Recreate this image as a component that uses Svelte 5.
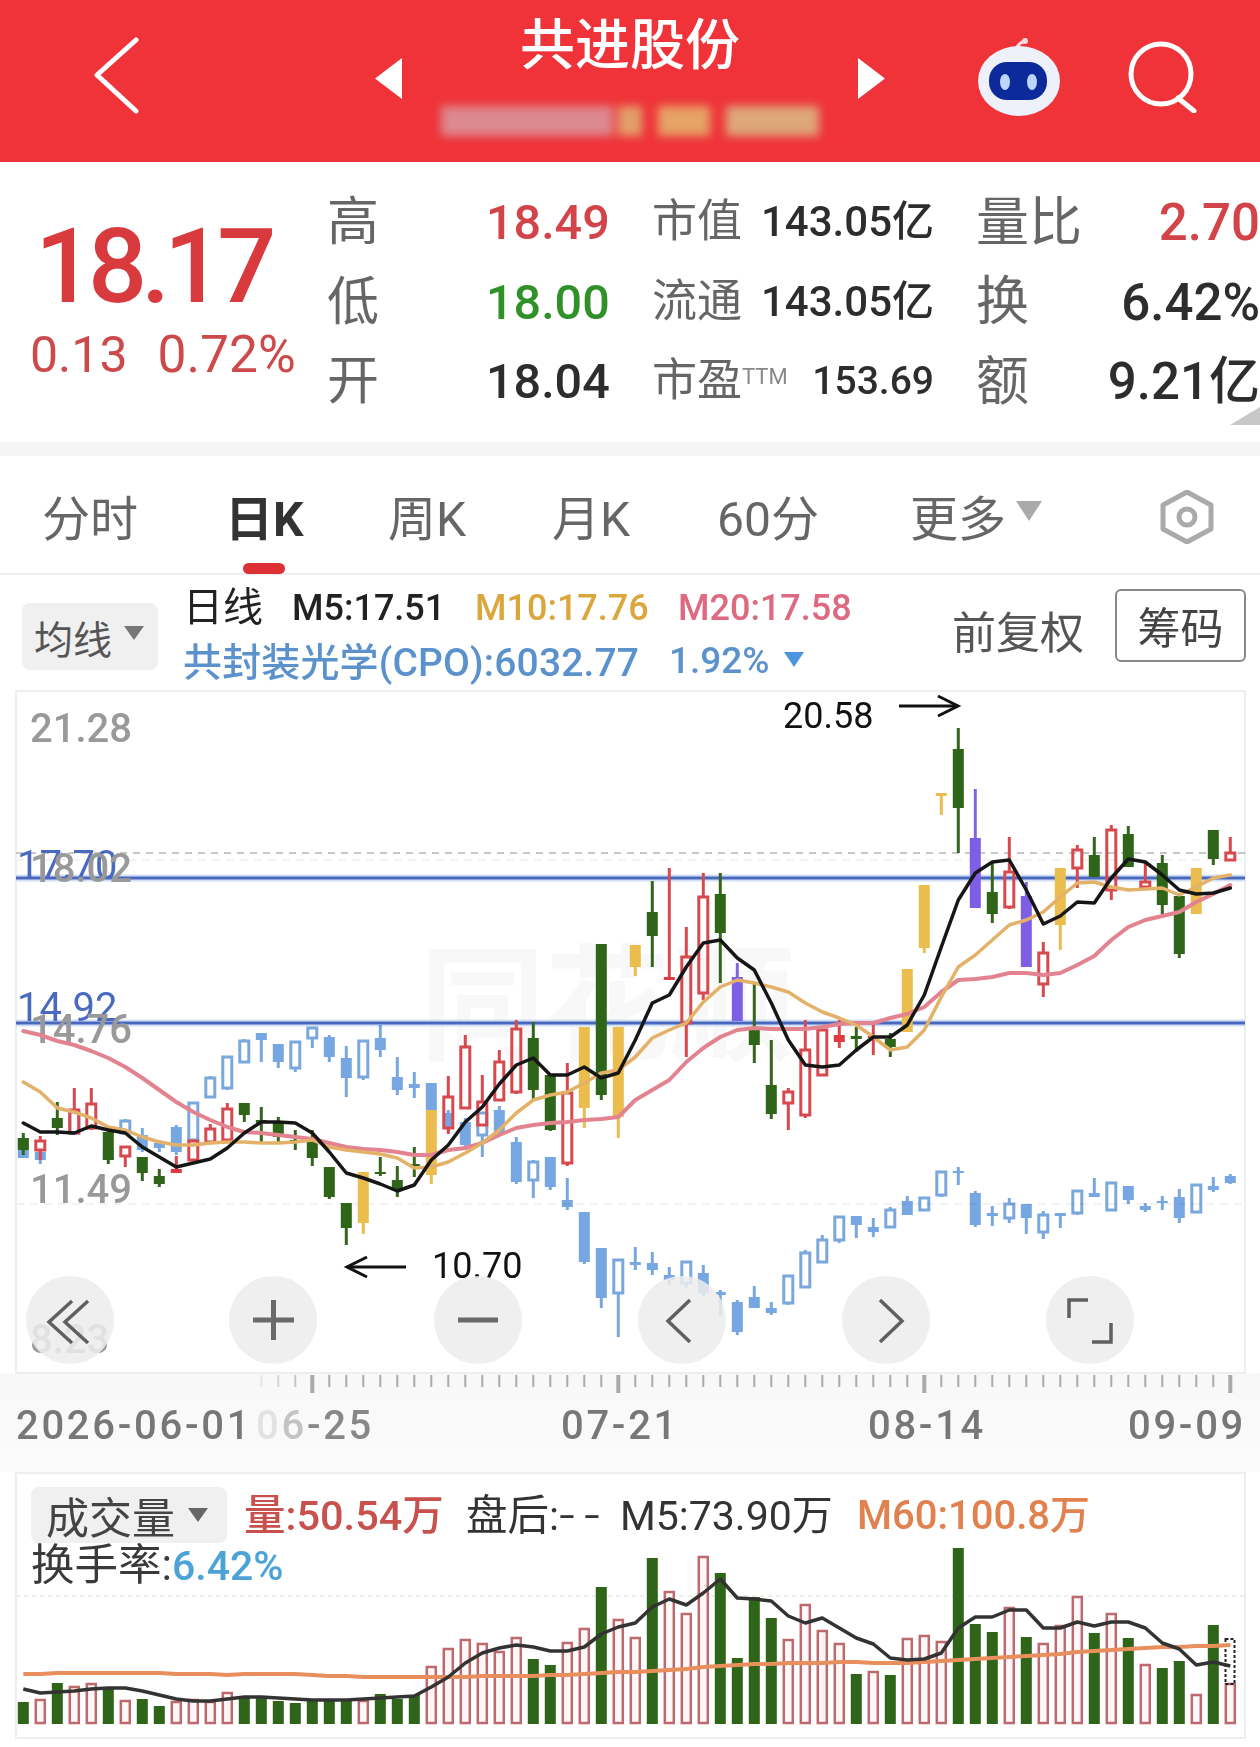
<script>
  const X = (i) => 23.3 + 17 * i;
  const main = `g 1133 1138 1150 1155|r 1136 1141 1150 1160|g 1102 1118 1128 1135|r 1088 1110 1133 1133|r 1088 1104 1128 1130|g 1130 1132 1160 1164|r 1147 1147 1156 1167|g 1157 1157 1173 1181|g 1169 1176 1184 1187|R 1156 1169 1173 1173|r 1140 1141 1160 1160|r 1124 1129 1142 1142|r 1103 1109 1140 1140|g 1103 1103 1115 1122|g 1107 1120 1123 1143|g 1117 1123 1137 1142|g 1130 1140 1141 1150|g 1130 1142 1158 1166|g 1167 1167 1197 1199|g 1203 1203 1228 1245|y 1172 1172 1223 1234|g 1157 1172 1174 1176|g 1166 1180 1190 1197|g 1147 1164 1166 1177|y 1110 1110 1175 1184|r 1076 1097 1128 1134|r 1035 1047 1108 1108|r 1075 1102 1125 1125|r 1050 1062 1100 1100|r 1020 1029 1092 1094|g 1022 1038 1090 1100|g 1075 1075 1130 1131|r 1063 1093 1163 1166|y 1027 1027 1108 1128|g 944 944 1095 1100|y 1027 1027 1117 1138|y 945 945 967 976|g 881 912 936 967|R 868 977 980 980|r 927 957 1023 1057|r 873 897 993 1000|g 873 894 933 983|p 963 977 1021 1021|g 983 1030 1045 1063|g 1040 1085 1114 1119|r 1088 1092 1103 1130|r 1020 1050 1115 1118|r 1030 1030 1075 1075|R 1020 1035 1042 1048|g 1027 1036 1039 1052|R 1025 1036 1038 1055|g 1033 1039 1047 1057|y 969 969 1032 1032|y 885 885 948 953|y 793 793 796 815|g 728 749 808 853|p 789 838 908 908|g 863 892 914 923|r 837 872 907 909|p 882 896 967 967|r 942 953 984 997|y 868 868 925 950|r 845 850 868 888|g 837 855 877 877|r 825 830 890 900|g 826 834 867 867|r 863 882 887 887|g 855 863 905 914|g 896 896 954 958|y 868 868 914 914|g 830 830 859 865|r 837 853 860 860`;
  const blue = `b 1136 1138 1158 1158|b 1150 1152 1160 1164|-|h 1110 1112 1133 1135|-|b 1150 1150 1160 1160|h 1119 1121 1133 1135|b 1128 1135 1150 1152|b 1140 1143 1148 1152|b 1125 1127 1152 1155|h 1103 1103 1140 1140|h 1076 1078 1097 1097|h 1057 1057 1088 1090|h 1039 1041 1062 1062|b 1033 1033 1040 1062|b 1044 1044 1062 1068|h 1042 1042 1068 1072|h 1028 1028 1038 1048|b 1035 1037 1057 1062|b 1046 1058 1078 1097|h 1041 1041 1077 1080|b 1025 1038 1050 1057|b 1057 1077 1090 1095|b 1072 1084 1088 1098|b 1083 1083 1110 1125|b 1110 1113 1127 1132|b 1118 1122 1145 1147|h 1113 1113 1135 1157|b 1106 1110 1133 1135|b 1137 1142 1182 1184|h 1160 1162 1180 1198|b 1157 1157 1187 1190|b 1178 1200 1207 1210|b 1212 1212 1262 1264|b 1248 1248 1298 1308|h 1260 1260 1293 1337|b 1247 1262 1265 1270|b 1252 1263 1270 1275|b 1267 1275 1280 1285|h 1262 1262 1283 1288|b 1265 1273 1293 1296|b 1290 1292 1295 1316|b 1300 1302 1332 1335|b 1286 1297 1308 1308|b 1302 1308 1313 1315|h 1276 1276 1303 1305|h 1250 1253 1287 1287|h 1235 1240 1262 1262|h 1217 1217 1240 1243|b 1216 1216 1225 1238|b 1218 1227 1232 1237|h 1207 1210 1227 1227|b 1196 1201 1215 1215|h 1198 1198 1210 1210|h 1172 1172 1195 1197|b 1167 1171 1173 1185|b 1191 1193 1225 1227|b 1206 1213 1216 1226|h 1198 1204 1218 1223|b 1204 1204 1218 1234|h 1211 1215 1232 1239|b 1213 1213 1216 1228|h 1191 1191 1213 1215|b 1178 1193 1197 1197|h 1183 1183 1210 1211|b 1186 1186 1200 1204|b 1203 1206 1210 1212|b 1196 1201 1203 1210|b 1189 1197 1218 1223|h 1185 1185 1212 1212|b 1177 1186 1190 1192|b 1174 1176 1183 1184`;
  const parse = (s) =>
    s.split('|').map((r, i) => {
      const [t, h, a, b, l] = r.split(' ');
      return { i, x: X(i), t, h: +h, a: +a, b: +b, l: +l };
    }).filter((c) => c.t !== '-');
  const mainC = parse(main);
  const blueC = parse(blue);

  const pts = (s) => s.trim().split(/\s+/).map((y, i) => `${X(i).toFixed(1)},${y}`).join(' ');
  const ma5 = pts(`1123 1132 1132 1133 1126 1130 1133 1147 1157 1167 1163 1159 1148 1133 1122 1122 1123 1133 1152 1173 1178 1184 1191 1185 1160 1145 1122 1107 1084 1065 1058 1075 1075 1067 1078 1073 1040 1003 995 967 943 940 958 970 1003 1040 1065 1067 1065 1050 1037 1037 1025 995 947 900 873 862 860 890 924 916 902 903 878 859 862 875 890 894 893 888`);
  const ma10 = pts(`1082 1092 1108 1112 1118 1127 1130 1137 1142 1145 1145 1143 1142 1142 1143 1143 1142 1140 1147 1150 1152 1154 1158 1168 1167 1162 1153 1143 1130 1113 1100 1095 1092 1083 1073 1070 1057 1038 1030 1023 1002 987 980 983 987 992 1003 1012 1018 1025 1037 1050 1047 1030 997 967 955 940 925 920 912 897 883 882 887 890 889 888 895 887 878 875`);
  const ma20 = pts(`1031 1035 1041 1045 1051 1058 1067 1078 1090 1102 1112 1120 1127 1132 1133 1135 1137 1139 1143 1147 1149 1150 1152 1155 1155 1150 1148 1143 1135 1128 1125 1123 1122 1120 1119 1117 1100 1090 1080 1062 1048 1037 1030 1028 1029 1029 1029 1027 1024 1023 1023 1018 1014 1007 992 980 979 977 973 973 975 973 965 956 940 927 920 916 912 902 894 885`);

  const volTops = `g1702 r1700 g1683 r1687 r1684 g1689 r1701 g1699 g1706 r1702 r1700 r1702 r1693 g1698 g1697 g1701 g1703 g1700 g1700 g1700 r1701 g1694 g1699 g1695 r1667 r1649 r1640 r1644 r1652 r1638 g1659 g1665 r1643 r1629 g1587 r1620 r1638 g1558 r1592 r1614 r1557 g1573 g1658 g1597 g1618 r1640 r1605 r1631 r1644 g1674 r1672 g1675 r1639 r1636 r1642 g1548 g1624 g1632 r1608 g1637 r1644 r1626 r1597 g1633 r1614 g1638 r1665 g1668 g1661 r1695 g1625 r1684`
    .split(' ').map((v, i) => ({ x: X(i), t: v[0], y: +v.slice(1) }));
  const volMa5 = pts(`1689 1693 1692 1691 1689 1688 1688 1691 1695 1699 1701 1701 1699 1697 1697 1698 1699 1700 1700 1700 1699 1698 1697 1696 1687 1677 1663 1653 1648 1645 1647 1651 1651 1647 1634 1627 1623 1607 1599 1605 1593 1579 1598 1599 1601 1616 1623 1618 1628 1638 1644 1658 1660 1659 1653 1628 1617 1617 1610 1610 1628 1628 1622 1626 1622 1622 1628 1643 1649 1665 1662 1666`);
  const volMa60 = pts(`1674 1674 1673 1673 1673 1673 1673 1673 1673 1674 1674 1674 1675 1674 1674 1674 1674 1675 1676 1676 1677 1677 1677 1677 1677 1677 1677 1676 1676 1676 1676 1675 1675 1674 1673 1672 1672 1671 1670 1669 1667 1666 1665 1664 1664 1663 1663 1663 1662 1662 1663 1663 1663 1662 1661 1660 1659 1658 1657 1656 1655 1654 1652 1651 1650 1649 1648 1647 1647 1646 1646 1645`);

  const ticks = Array.from({ length: 58 }, (_, k) => k + 14);
  const majors = new Set([17, 35, 53, 71]);
  const tickOpacity = (i) => (i < 17 ? 0.25 + (i - 14) * 0.2 : 1);
</script>

<div class="page">
  <header class="head">
    <svg class="back" viewBox="0 0 46 79"><polyline points="43,4 4,39 43,75" /></svg>
    <svg class="tri tri-l" viewBox="0 0 27 41"><polygon points="27,0 0,20.5 27,41" /></svg>
    <div class="name">
      <div class="title">共进股份</div>
      <div class="blurred">
        <i class="b1"></i><i class="b2"></i><i class="b3"></i><i class="b4"></i>
      </div>
    </div>
    <svg class="tri tri-r" viewBox="0 0 27 41"><polygon points="0,0 27,20.5 0,41" /></svg>
    <svg class="robot" viewBox="0 0 86 80">
      <path class="ant" d="M40 24 C38 12 42 6 49 4" />
      <circle class="antd" cx="49" cy="4" r="3" />
      <ellipse class="rhead" cx="43" cy="44" rx="41" ry="35" />
      <rect class="visor" x="13" y="25" width="58" height="38" rx="18" />
      <ellipse class="eye" cx="29" cy="45" rx="5" ry="8" />
      <ellipse class="eye" cx="56" cy="45" rx="5" ry="8" />
    </svg>
    <svg class="search" viewBox="0 0 70 72">
      <circle cx="34" cy="33" r="30" />
      <line x1="51" y1="57" x2="67" y2="70" />
    </svg>
  </header>

  <section class="quote">
    <div class="price">
      <div class="big">18.17</div>
      <div class="chg"><span>0.13</span><span class="chg-pct">0.72%</span></div>
    </div>
    <div class="stats">
      <span class="lb">高</span><span class="v r">18.49</span>
      <span class="lm">市值</span><span class="vm">143.05亿</span>
      <span class="ll">量比</span><span class="vr num r">2.70</span>

      <span class="lb">低</span><span class="v g">18.00</span>
      <span class="lm">流通</span><span class="vm">143.05亿</span>
      <span class="ll">换</span><span class="vr num">6.42%</span>

      <span class="lb">开</span><span class="v">18.04</span>
      <span class="lm">市盈<sup>TTM</sup></span><span class="vm pe">153.69</span>
      <span class="ll">额</span><span class="vr big-r">9.21亿</span>
    </div>
    <svg class="corner" viewBox="0 0 30 18"><polygon points="30,0 30,18 0,18" /></svg>
  </section>

  <div class="band"></div>

  <nav class="tabs">
    <span>分时</span>
    <span class="active">日K</span>
    <span>周K</span>
    <span>月K</span>
    <span>60分</span>
    <span class="more">更多<svg viewBox="0 0 26 20"><polygon points="0,0 26,0 13,20" /></svg></span>
    <svg class="hex" viewBox="0 0 54 54">
      <polygon points="27,2 51,15 51,39 27,52 3,39 3,15" />
      <circle cx="27" cy="27" r="8" />
    </svg>
  </nav>

  <div class="legend">
    <div class="ma-btn">均线<svg viewBox="0 0 20 14"><polygon points="0,0 20,0 10,14" /></svg></div>
    <div class="ma-info">
      <div class="line1">
        <span class="l-day">日线</span>
        <span class="l-m5">M5:17.51</span>
        <span class="l-m10">M10:17.76</span>
        <span class="l-m20">M20:17.58</span>
      </div>
      <div class="line2">
        <span class="l-cpo">共封装光学(CPO):6032.77</span>
        <span class="l-pct">1.92%</span>
        <svg viewBox="0 0 20 15"><polygon points="0,0 20,0 10,15" /></svg>
      </div>
    </div>
    <span class="fq">前复权</span>
    <span class="chip">筹码</span>
  </div>

  <svg class="chart" viewBox="0 690 1260 782">
    <defs>
      <linearGradient id="axisbg" x1="0" y1="0" x2="0" y2="1">
        <stop offset="0" stop-color="#f8f8f8" />
        <stop offset="1" stop-color="#fbfbfb" />
      </linearGradient>
    </defs>
    <rect x="0" y="1373" width="1260" height="99" fill="url(#axisbg)" />
    <rect class="frame" x="16" y="691" width="1229" height="682" />
    <text class="wm" x="420" y="1050">同花顺</text>

    <line class="faint" x1="16" y1="860" x2="1245" y2="860" />
    <line class="faint" x1="16" y1="1204" x2="1245" y2="1204" />
    <line class="dash" x1="16" y1="853" x2="1245" y2="853" />

    <line class="hl-h" x1="16" y1="878" x2="1245" y2="878" />
    <line class="hl-h" x1="16" y1="1023" x2="1245" y2="1023" />
    <line class="hl" x1="16" y1="878" x2="1245" y2="878" />
    <line class="hl" x1="16" y1="1023" x2="1245" y2="1023" />
    <text class="yb" x="17" y="879">17.70</text>
    <text class="yb" x="17" y="1021">14.92</text>

    <text class="yl" x="30" y="742">21.28</text>
    <text class="yl" x="30" y="882">18.02</text>
    <text class="yl" x="30" y="1043">14.76</text>
    <text class="yl" x="30" y="1203">11.49</text>
    <text class="yl" x="30" y="1353">8.23</text>

    <g class="bluegrp">
      {#each blueC as c}
        <line class="w-b" x1={c.x} x2={c.x} y1={c.h} y2={c.l} />
        {#if c.t === 'b'}
          <rect class="s-b" x={c.x - 5.5} y={c.a} width="11" height={Math.max(c.b - c.a, 2)} />
        {:else}
          <rect class="h-b" x={c.x - 4.5} y={c.a} width="9" height={c.b - c.a} />
        {/if}
      {/each}
    </g>

    {#each mainC as c}
      {#if c.t === 'r'}
        <line class="w-r" x1={c.x} x2={c.x} y1={c.h} y2={c.a} />
        <line class="w-r" x1={c.x} x2={c.x} y1={c.b} y2={c.l} />
        <rect class="h-r" x={c.x - 4.5} y={c.a} width="9" height={c.b - c.a} />
      {:else}
        <line class="w-{c.t}" x1={c.x} x2={c.x} y1={c.h} y2={c.l} />
        <rect class="s-{c.t}" x={c.x - 5.5} y={c.a} width="11" height={Math.max(c.b - c.a, 2)} />
      {/if}
    {/each}

    <polyline class="m20" points={ma20} />
    <polyline class="m10" points={ma10} />
    <polyline class="m5" points={ma5} />

    <text class="ann" x="783" y="728">20.58</text>
    <g class="arrow">
      <line x1="899" y1="706" x2="958" y2="706" />
      <polyline points="938,696 958,706 938,716" />
    </g>
    <text class="ann" x="432" y="1278">10.70</text>
    <g class="arrow">
      <line x1="347" y1="1267" x2="406" y2="1267" />
      <polyline points="367,1257 347,1267 367,1277" />
    </g>

    <g class="btns">
      <circle cx="70" cy="1320" r="44" />
      <circle cx="273" cy="1320" r="44" />
      <circle cx="478" cy="1320" r="44" />
      <circle cx="682" cy="1320" r="44" />
      <circle cx="886" cy="1320" r="44" />
      <circle cx="1090" cy="1320" r="44" />
    </g>
    <g class="ico">
      <polyline points="72,1301 49,1322 72,1343" />
      <polyline points="88,1301 65,1322 88,1343" />
      <path class="thick" d="M253 1320 H294 M273.500 1300 V1340" />
      <path class="thick" d="M458 1320 H498" />
      <polyline points="690,1300 668,1321 690,1342" />
      <polyline points="880,1300 902,1321 880,1342" />
      <polyline points="1069,1318 1069,1300 1088,1300" />
      <polyline points="1092,1342 1111,1342 1111,1323" />
    </g>

    {#each ticks as i}
      <line
        class="tick"
        x1={X(i)}
        x2={X(i)}
        y1="1375"
        y2={majors.has(i) ? 1393 : 1387}
        stroke-width={majors.has(i) ? 4 : 2}
        opacity={tickOpacity(i)}
      />
    {/each}

    <text class="date" x="16" y="1439">2026-06-01</text>
    <text class="date" x="256" y="1439"><tspan class="f1">0</tspan><tspan class="f2">6</tspan><tspan class="f3">-25</tspan></text>
    <text class="date" x="561" y="1439">07-21</text>
    <text class="date" x="868" y="1439">08-14</text>
    <text class="date" x="1128" y="1439">09-09</text>
  </svg>

  <section class="vol">
    <div class="vol-legend">
      <div class="vl1">
        <div class="vol-btn">成交量<svg viewBox="0 0 20 14"><polygon points="0,0 20,0 10,14" /></svg></div>
        <span class="v-red">量:50.54万</span>
        <span class="v-after">盘后:<span class="hy">--</span></span>
        <span class="v-m5">M5:73.90万</span>
        <span class="v-m60">M60:100.8万</span>
      </div>
      <div class="vl2">换手率:<span>6.42%</span></div>
    </div>
    <svg class="volchart" viewBox="0 1472 1260 275">
      <rect class="frame" x="16" y="1473" width="1229" height="265" />
      <line class="vdot" x1="16" y1="1596" x2="1245" y2="1596" />
      {#each volTops as b}
        {#if b.t === 'g'}
          <rect class="vg" x={b.x - 5.500} y={b.y} width="11" height={1724 - b.y} />
        {:else}
          <rect class="vr-b" x={b.x - 4.5} y={b.y} width="9" height={1723 - b.y} />
        {/if}
      {/each}
      <rect class="vdash" x="1225.500" y="1639" width="9" height="45" />
      <polyline class="vm60" points={volMa60} />
      <polyline class="vm5" points={volMa5} />
    </svg>
  </section>
</div>

<style>
  :global(body) {
    margin: 0;
    background: #fff;
  }
  .page {
    width: 1260px;
    height: 1747px;
    overflow: hidden;
    background: #fff;
    font-family: Roboto, "Noto Sans CJK SC", sans-serif;
    color: #333;
  }

  /* header */
  .head {
    height: 162px;
    background: #ef3339;
    display: flex;
    align-items: flex-start;
  }
  .back {
    width: 46px;
    height: 79px;
    margin: 36px 0 0 93px;
    fill: none;
    stroke: #fff;
    stroke-width: 5;
    stroke-linejoin: round;
    stroke-linecap: round;
  }
  .tri {
    width: 27px;
    height: 41px;
    margin-top: 58px;
    fill: #fff;
  }
  .tri-l {
    margin-left: 236px;
  }
  .name {
    width: 456px;
    display: flex;
    flex-direction: column;
    align-items: center;
  }
  .title {
    margin-top: 8px;
    height: 84px;
    line-height: 74px;
    font-size: 55px;
    font-weight: 500;
    color: #fff;
  }
  .blurred {
    display: flex;
    align-items: center;
    margin-top: 11px;
    height: 36px;
    filter: blur(5px);
  }
  .blurred i {
    display: block;
    height: 30px;
  }
  .b1 {
    width: 172px;
    height: 26px;
    background: #dc8a90;
  }
  .b2 {
    width: 24px;
    margin-left: 5px;
    background: #e2a06a;
  }
  .b3 {
    width: 52px;
    margin-left: 16px;
    background: #e6a466;
  }
  .b4 {
    width: 93px;
    margin-left: 16px;
    background: #dda87a;
  }
  .robot {
    width: 86px;
    height: 80px;
    margin: 37px 0 0 91px;
  }
  .ant {
    fill: none;
    stroke: #f6d9dc;
    stroke-width: 3;
  }
  .antd {
    fill: #f6d9dc;
  }
  .rhead {
    fill: #eef0fa;
  }
  .visor {
    fill: #0c2a9a;
  }
  .eye {
    fill: #bcd6ff;
  }
  .search {
    width: 70px;
    height: 72px;
    margin: 41px 0 0 65px;
    fill: none;
    stroke: #fff;
    stroke-width: 5;
    stroke-linecap: round;
  }

  /* quote */
  .quote {
    height: 280px;
    position: relative;
    display: flex;
  }
  .price {
    width: 327px;
    flex: none;
    box-sizing: border-box;
    padding: 50px 0 0 30px;
    color: #d83a3e;
    font-weight: 500;
  }
  .big {
    font-size: 104px;
    line-height: 110px;
    font-weight: 500;
    letter-spacing: -6px;
    margin-left: 5px;
  }
  .chg {
    display: flex;
    gap: 30px;
    font-size: 50px;
    line-height: 60px;
    margin-top: 3px;
    color: #cc4a4c;
    font-weight: 400;
  }
  .chg-pct {
    font-size: 51.500px;
  }
  .stats {
    padding-top: 16px;
    display: grid;
    grid-template-columns: 159px 166px 109px 215px 106px 178px;
    grid-template-rows: repeat(3, 79.5px);
    align-items: center;
  }
  .lb {
    font-size: 52px;
    color: #666;
  }
  .v {
    font-size: 48.500px;
    font-weight: 500;
    color: #2d2d2d;
    margin-top: 10px;
  }
  .lm {
    font-size: 45px;
    color: #666;
    white-space: nowrap;
  }
  .lm sup {
    font-size: 22px;
    color: #888;
    vertical-align: 12px;
    line-height: 0;
  }
  .vm {
    font-size: 42px;
    font-weight: 500;
    color: #2d2d2d;
    width: 170px;
    text-align: right;
    white-space: nowrap;
  }
  .vm.pe {
    font-size: 39px;
    width: 173px;
    margin-top: 8px;
  }
  .ll {
    font-size: 53px;
    color: #666;
    white-space: nowrap;
  }
  .vr {
    font-size: 50px;
    font-weight: 500;
    color: #2d2d2d;
    text-align: right;
    white-space: nowrap;
  }
  .vr.big-r {
    font-size: 51px;
  }
  .num {
    margin-top: 10px;
    font-size: 51px;
  }
  .r {
    color: #d2444a;
  }
  .g {
    color: #2f9128;
  }
  .corner {
    position: absolute;
    right: 0;
    bottom: 17px;
    width: 30px;
    height: 18px;
    fill: #c8c8c8;
  }
  .band {
    height: 14px;
    background: #f5f5f5;
  }

  /* tabs */
  .tabs {
    height: 119px;
    box-sizing: border-box;
    border-bottom: 2px solid #eee;
    padding-left: 42px;
    display: grid;
    grid-template-columns: 183px 163px 164px 165px 193px 250px auto;
    align-items: center;
    font-size: 48px;
    color: #666;
  }
  .active {
    position: relative;
    font-weight: 700;
    color: #333;
  }
  .active::after {
    content: "";
    position: absolute;
    left: 18px;
    width: 42px;
    height: 11px;
    bottom: -24px;
    border-radius: 6px;
    background: #dc3034;
  }
  .more {
    display: flex;
    align-items: center;
    gap: 10px;
  }
  .more svg {
    width: 26px;
    height: 20px;
    fill: #aaa;
    margin-top: -8px;
  }
  .hex {
    width: 54px;
    height: 54px;
    fill: none;
    stroke: #aaa;
    stroke-width: 5;
    stroke-linejoin: round;
    margin-top: 4px;
  }

  /* legend row */
  .legend {
    height: 115px;
    display: flex;
    position: relative;
  }
  .ma-btn {
    width: 136px;
    height: 67px;
    margin: 28px 0 0 22px;
    background: #f0f0f0;
    border-radius: 8px;
    box-sizing: border-box;
    padding-left: 12px;
    display: flex;
    align-items: center;
    gap: 12px;
    font-size: 39px;
    color: #555;
    flex: none;
  }
  .ma-btn svg {
    width: 20px;
    height: 14px;
    fill: #777;
    margin-top: -8px;
  }
  .ma-info {
    margin-left: 25px;
    padding-top: 8px;
    width: 760px;
    flex: none;
  }
  .line1 {
    display: grid;
    grid-template-columns: 109px 183px 203px auto;
    align-items: center;
    height: 50px;
    font-size: 36px;
    font-weight: 500;
  }
  .l-day {
    font-size: 40px;
    font-weight: 400;
    color: #222;
    margin-top: -8px;
  }
  .l-m5 {
    color: #222;
  }
  .l-m10 {
    color: #dba73c;
  }
  .l-m20 {
    color: #dd6a80;
  }
  .line2 {
    display: flex;
    align-items: center;
    height: 50px;
    margin-top: 1px;
    font-size: 39px;
    color: #5b92cc;
    white-space: nowrap;
  }
  .l-cpo {
    width: 486px;
    letter-spacing: 0.15px;
    font-weight: 500;
  }
  .l-pct {
    width: 115px;
    font-size: 37px;
    font-weight: 500;
    margin-top: 3px;
  }
  .line2 svg {
    width: 20px;
    height: 15px;
    fill: #4b94de;
  }
  .fq {
    position: absolute;
    left: 952px;
    top: 29px;
    font-size: 44px;
    line-height: 60px;
    color: #555;
  }
  .chip {
    position: absolute;
    left: 1115px;
    top: 14px;
    width: 131px;
    height: 73px;
    box-sizing: border-box;
    border: 2px solid #888;
    border-radius: 6px;
    text-align: center;
    line-height: 76px;
    font-size: 43px;
    color: #444;
  }

  /* chart */
  .chart,
  .volchart {
    display: block;
    width: 1260px;
  }
  .chart {
    height: 782px;
  }
  .frame {
    fill: #fff;
    stroke: #eee;
    stroke-width: 2;
  }
  .wm {
    font-size: 125px;
    font-weight: 700;
    fill: #f8f8f8;
  }
  .faint {
    stroke: #eee;
    stroke-width: 1.500;
    stroke-dasharray: 8 6;
  }
  .dash {
    stroke: #b5b5b5;
    stroke-width: 1.500;
    stroke-dasharray: 7 6;
  }
  .yl {
    font-size: 40px;
    font-weight: 500;
    fill: #999;
  }
  .yb {
    font-size: 40px;
    fill: #4a69c0;
  }
  .hl {
    stroke: #4868bf;
    stroke-width: 3;
  }
  .hl-h {
    stroke: #d3dff5;
    stroke-width: 7;
  }
  .bluegrp {
    mix-blend-mode: multiply;
  }
  .w-b {
    stroke: #77a7e2;
    stroke-width: 3;
  }
  .s-b {
    fill: #77a7e2;
  }
  .h-b {
    fill: #fff;
    stroke: #7aa7dc;
    stroke-width: 3;
  }
  .w-r {
    stroke: #d8484f;
    stroke-width: 3;
  }
  .h-r {
    fill: none;
    stroke: #d8484f;
    stroke-width: 3;
  }
  .w-R {
    stroke: #d8484f;
    stroke-width: 3;
  }
  .s-R {
    fill: #e03a40;
  }
  .w-g {
    stroke: #35651d;
    stroke-width: 3;
  }
  .s-g {
    fill: #2f6518;
  }
  .w-y {
    stroke: #eabd4e;
    stroke-width: 3;
  }
  .s-y {
    fill: #eabd4e;
  }
  .w-p {
    stroke: #8267dc;
    stroke-width: 3;
  }
  .s-p {
    fill: #7f5ee6;
  }
  .m5,
  .m10,
  .m20 {
    fill: none;
    stroke-linejoin: round;
    stroke-linecap: round;
  }
  .m5 {
    stroke: #161616;
    stroke-width: 3.500;
  }
  .m10 {
    stroke: #e3b168;
    stroke-width: 3.500;
  }
  .m20 {
    stroke: #e2838f;
    stroke-width: 4;
  }
  .ann {
    font-size: 36px;
    fill: #111;
  }
  .arrow {
    fill: none;
    stroke: #111;
    stroke-width: 3;
  }
  .btns {
    fill: #ececec;
    fill-opacity: 0.86;
  }
  .ico {
    fill: none;
    stroke: #606060;
    stroke-width: 3.500;
  }
  .ico .thick {
    stroke-width: 5;
    stroke: #6a6a6a;
  }
  .tick {
    stroke: #aaa;
  }
  .date {
    font-size: 40px;
    font-weight: 500;
    fill: #777;
    letter-spacing: 2.700px;
  }
  .f1 {
    fill: #e2e2e2;
  }
  .f2 {
    fill: #c4c4c4;
  }
  .f3 {
    fill: #888;
  }

  /* volume */
  .vol {
    position: relative;
    height: 275px;
  }
  .volchart {
    height: 275px;
  }
  .vol-legend {
    position: absolute;
    left: 31px;
    top: 15px;
    z-index: 1;
  }
  .vl1 {
    display: flex;
    align-items: center;
    font-size: 41.500px;
    white-space: nowrap;
    font-weight: 500;
  }
  .vl1 > span {
    margin-top: -6px;
  }
  .vol-btn {
    width: 196px;
    height: 56px;
    box-sizing: border-box;
    padding-left: 15px;
    background: #f0f0f0;
    border-radius: 8px;
    display: flex;
    align-items: center;
    gap: 13px;
    font-size: 43px;
    font-weight: 400;
    color: #444;
  }
  .vol-btn svg {
    width: 20px;
    height: 14px;
    fill: #666;
  }
  .v-red {
    margin-left: 17px;
    width: 222px;
    color: #c8514e;
  }
  .v-after {
    width: 154px;
    color: #333;
    font-weight: 400;
  }
  .hy {
    font-size: 56px;
    font-weight: 300;
    letter-spacing: 9px;
    vertical-align: -4px;
    line-height: 0;
  }
  .v-m5 {
    width: 237px;
    font-size: 41px;
    color: #333;
    font-weight: 400;
  }
  .v-m60 {
    font-size: 40px;
    color: #e0814f;
  }
  .vl2 {
    font-size: 43.500px;
    line-height: 42px;
    margin-top: 2px;
    color: #3a3a3a;
  }
  .vl2 span {
    font-size: 41px;
    color: #4ba3d6;
    font-weight: 500;
  }
  .vdot {
    stroke: #eee;
    stroke-width: 2;
    stroke-dasharray: 4 4;
  }
  .vg {
    fill: #2f6518;
  }
  .vr-b {
    fill: #fff7f7;
    stroke: #bd6a6e;
    stroke-width: 2.500;
  }
  .vdash {
    fill: none;
    stroke: #222;
    stroke-width: 2;
    stroke-dasharray: 3 2;
  }
  .vm5,
  .vm60 {
    fill: none;
    stroke-linejoin: round;
  }
  .vm5 {
    stroke: #333;
    stroke-width: 3.500;
  }
  .vm60 {
    stroke: #e88f5d;
    stroke-width: 4;
  }
</style>
